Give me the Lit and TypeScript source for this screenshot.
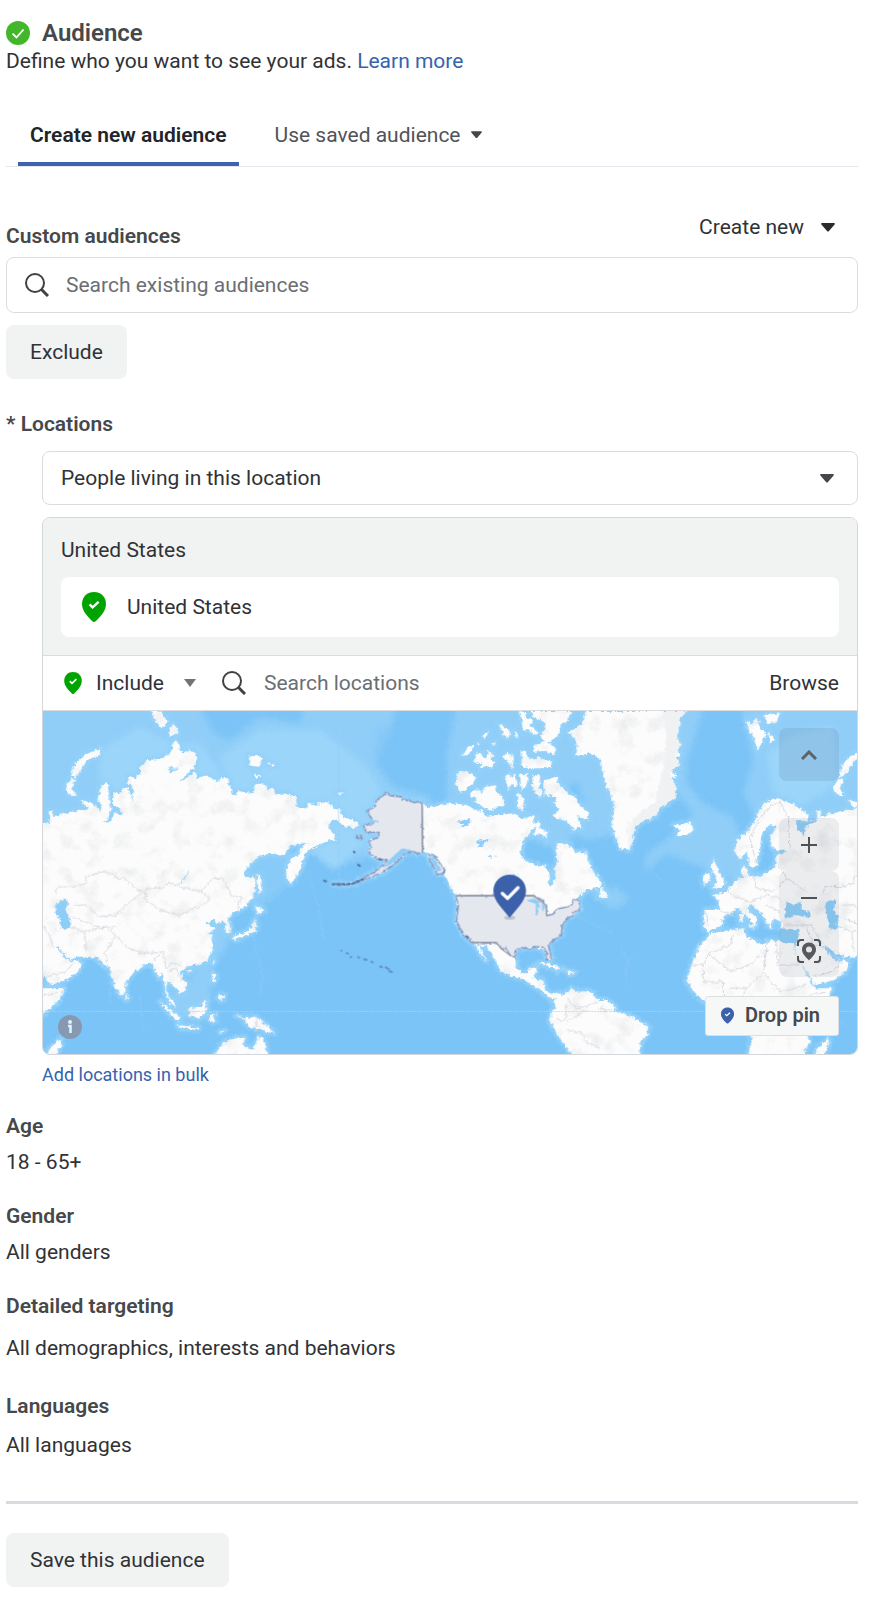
import { LitElement, html, css } from "lit";
import { customElement } from "lit/decorators.js";

// Map geometry. Each sheet has its own origin on the 2442 x 1029 canvas.
const EURASIA =
  "M10,355L40,355 42,340 38,320 52,316 50,336 70,334 75,322 95,326 130,314 150,316 158,308 145,300 134,286 165,292 185,310 192,320 198,302 188,290 186,272 192,265 200,240 210,232 220,240 218,260 222,300 225,310 226,320 218,330 214,345 200,350 215,353 225,345 236,322 258,332 255,310 232,302 232,260 240,265 258,262 262,245 275,250 283,265 290,292 292,262 286,240 275,235 277,215 300,218 305,208 315,208 312,185 335,165 370,162 392,150 400,158 395,145 408,138 410,118 422,108 432,125 430,138 472,140 484,158 475,180 470,190 445,215 430,230 465,212 480,200 482,220 495,215 520,215 545,232 555,218 578,220 580,240 590,265 600,272 605,258 635,262 650,265 655,240 668,236 690,240 695,255 710,246 720,268 750,265 770,272 780,275 782,300 790,310 815,310 815,295 840,298 812,292 827,300 847,303 847,290 867,293 887,298 892,310 912,315 922,335 947,345 962,352 970,360 952,372 942,360 932,370 917,358 902,345 887,348 877,365 897,395 902,408 877,405 852,420 832,430 817,436 806,452 795,490 780,515 765,538 755,520 752,490 765,460 785,450 800,425 814,410 790,418 765,420 745,450 720,446 690,448 668,452 640,480 622,500 625,510 645,520 655,512 660,540 650,575 620,610 598,620 585,628 575,640 582,665 580,685 570,682 568,660 560,645 555,650 540,655 535,645 525,645 510,658 525,665 540,668 520,685 530,700 528,735 515,765 485,778 450,785 440,795 432,800 440,820 452,840 448,858 432,865 420,850 405,838 395,830 390,850 400,880 415,890 418,905 405,900 390,870 385,830 378,800 368,818 358,795 345,775 325,780 310,790 295,800 270,830 268,860 255,872 240,850 225,810 220,785 205,783 185,760 160,755 120,755 105,765 80,745 65,722 60,728 75,745 90,762 110,770 120,765 137,775 125,800 90,825 40,840 20,800 10,800Z" +
  "M10,850L85,850 70,885 25,925 10,935Z M75,1000L75,1020 60,1050 35,1050 40,1030 65,1010Z" +
  "M195,130L190,150 155,165 130,200 120,215 105,215 115,180 145,150Z M105,218L118,222 108,250 122,272 100,268 88,250Z" +
  "M345,15L375,20 380,30 395,50 380,70 360,55Z M400,70L412,58 428,75 425,88 398,95Z";

const ASIA_ISLANDS =
  "M638,155L660,150 680,162 670,185 640,182Z M695,173L718,180 710,186Z M655,205L672,214 660,220Z" +
  "M535,1050L565,1010 600,1000 628,998 620,1020 650,1035 668,995 680,1000 690,1030 695,1055 535,1055Z" +
  "M600,930L625,940 660,935 690,960 715,985 690,980 670,970 640,965 625,945Z M458,910L490,905 510,885 510,920 490,940 460,930Z" +
  "M372,890L400,910 430,935 430,950 405,930Z M425,960L490,968 485,974 430,968Z M520,930L540,928 530,936 538,950 524,948Z" +
  "M528,805L540,810 536,832 528,828Z M550,868L565,872 560,886 545,880Z M590,700L600,690 640,680 655,645 662,660 655,680 630,690 600,705Z" +
  "M658,602L685,615 665,628Z M663,510L672,516 678,560 668,565Z M530,765L537,768 530,778Z M268,866L278,880 270,886Z M455,795L466,798 458,804Z M550,980L566,976 552,984Z";

const AMERICAS =
  "M366,296L385,310 410,300 450,295 500,300 530,318 545,315 555,335 575,330 600,330 640,325 655,335 670,345 690,330 705,335 700,350 712,360 700,370 690,385 675,400 665,425 660,450 680,470 720,482 735,485 750,510 745,535 757,542 768,520 762,490 775,470 768,440 772,415 800,415 820,435 830,445 855,440 865,470 880,500 905,535 900,548 870,552 855,560 830,580 838,590 840,615 820,628 800,640 785,665 785,690 760,700 745,720 755,760 740,765 735,735 700,725 665,730 645,735 645,760 650,790 665,805 680,805 690,790 710,785 705,810 700,822 730,825 735,855 760,870 775,862 770,880 750,880 730,862 690,835 670,820 640,815 600,795 590,770 575,745 560,725 545,725 525,715 515,712 490,690 470,650 475,600 467,572 440,520 430,495 400,448 375,442 368,440Z" +
  "M760,890L775,865 790,870 815,850 830,860 870,858 895,885 920,885 945,905 940,920 985,930 1045,965 1040,990 1020,1015 1018,1055 820,1055 780,1000 750,950 755,920 770,905Z" +
  "M522,715L540,728 550,750 560,768 545,752Z M715,775L740,773 790,793 762,790Z M800,796L826,802 805,808Z M760,790L772,800Z M450,535L470,558 455,552Z" +
  "M475,198L500,200 528,215 520,235 495,255 480,262 468,240Z M515,262L530,250 545,265 555,246 590,240 585,255 610,280 615,300 590,305 575,318 545,305 525,290 530,278 510,275Z" +
  "M485,152L505,126 525,120 505,150Z M530,145L545,140 548,158 560,160 565,135 580,150 568,165 588,172 575,188 560,182 540,190 545,175 522,172Z M596,58L612,66 630,75 628,98 612,92Z M548,90L565,80 555,105Z M610,150L625,142 628,155 640,145 636,192 628,170 615,165Z M645,75L655,95 648,102Z M530,115L538,112 536,120Z M575,115L590,110 580,122Z" +
  "M655,18L680,22 675,35 700,45 690,60 705,72 720,85 700,90 685,72 672,78 668,50Z M690,18L815,18 800,50 785,58 775,95 755,105 745,115 765,125 765,148 735,138 700,140 705,120 735,110 720,90 740,70 730,50 705,40Z M665,135L678,140 690,165 720,160 755,170 750,190 685,190 665,180Z" +
  "M615,215L630,208 634,220 645,205 650,245 635,240 625,255Z M660,210L685,205 680,240 665,260Z M700,210L720,215 718,250 728,262 722,275 705,265 696,240Z M728,225L745,222 770,215 775,235 790,248 810,270 822,274 840,300 865,325 865,345 850,342 830,330 845,370 832,368 820,375 806,352 790,345 760,335 775,310 762,295 770,280 750,270 735,276Z M715,345L720,370 745,382 735,395 720,388 700,390Z M652,262L675,285 668,320 652,305Z M735,390L742,395 738,404Z M112,264L128,262 122,270Z";

const ALASKA =
  "M262,263L270,272 300,275 310,285 325,285 340,293 355,290 366,296 368,440 355,445 340,440 320,440 300,462 280,480 250,500 215,515 190,525 165,535 120,542 100,536 150,537 190,520 225,500 250,480 262,465 230,462 205,440 212,425 208,405 235,398 238,382 200,382 190,362 220,355 215,340 200,318 225,305 230,285Z M385,455L400,448 435,495 430,505 412,508Z M170,392L184,392 186,400 170,400Z";
const LOWER_48 =
  "M467,572L700,572 722,582 740,602 740,632 758,628 770,612 805,605 815,600 820,585 830,582 838,590 838,615 820,622 820,632 800,640 785,665 785,690 760,705 745,720 755,760 738,765 740,740 730,727 700,725 695,732 665,728 648,735 645,757 632,752 615,728 605,732 588,712 550,716 515,712 490,690 470,650 475,600Z";

const GREENLAND =
  "M20,18L320,18 296,40 300,60 290,95 305,120 285,128 300,150 280,165 300,180 270,195 292,215 260,225 290,250 258,250 285,280 255,300 240,310 225,335 185,350 165,365 150,435 120,430 95,360 104,300 75,230 60,160 30,145 -10,152 -10,110 -35,80 5,60Z";
const ATLANTIC =
  "M280,360L300,358 330,352 342,372 320,390 290,390 298,375Z M498,45L515,60 530,35 545,75 560,90 550,100 535,135 520,95 505,70Z M550,30L600,25 590,50 565,55Z M565,82L585,105 570,112Z" +
  "M400,460L412,490 425,515 437,535 425,548 395,550 410,530 405,510 392,490Z M370,515L390,500 390,530 370,540Z M65,545L85,575 55,577Z" +
  "M600,282L640,298 685,330 685,352 650,350 655,380 675,385 685,350 720,340 720,700 660,675 600,670 605,650 580,640 575,670 560,655 545,625 515,600 500,610 530,640 525,665 515,650 490,625 475,610 455,620 430,635 425,660 405,670 385,680 370,665 375,615 420,615 415,585 400,570 440,560 475,520 495,515 483,500 490,478 500,490 505,510 525,515 560,505 585,485 590,450 620,440 580,430 568,400 590,365 568,360 545,385 540,430 530,480 510,490 500,440 480,462 463,440 470,405 500,385 525,345 545,300 580,280Z" +
  "M655,670L720,670 720,830 706,842 660,770 640,725 655,715Z" +
  "M390,685L490,670 500,695 550,720 570,705 640,715 640,730 670,790 700,845 710,855 755,850 740,885 690,930 670,960 690,1010 665,1055 505,1055 515,1000 500,950 470,900 375,890 340,860 320,825 335,780 355,730 380,700Z" +
  "M478,625L490,625 488,652 478,648Z M505,662L522,660 520,670Z";

const EURASIA_BORDERS =
  "M58,565L65,545 110,545 150,535 150,515 205,498 245,520 265,520 300,550 335,570 M335,548L380,550 395,533 430,545 495,560 530,520 560,520 590,575 615,575 605,615 M335,550L325,580 370,615 430,630 500,600 522,580 495,560 M115,600L150,600 190,635 240,630 270,600 315,565 M105,635L160,655 195,670 240,665 M105,665L145,680 150,740 M145,680L210,665 240,690 205,745 215,770 M240,690L270,725 320,745 380,740 350,770 M380,740L390,790 410,775 440,780 M395,800L420,790 440,830 M20,660L40,690 55,730 M30,815L90,800 115,770 M20,870L65,862 M660,935L660,980";
const ATLANTIC_BORDERS =
  "M530,480L510,400 540,340 575,300 600,290 625,340 630,430 M440,560L470,575 510,590 560,570 600,580 M520,515L530,550 580,560 620,520 590,470 M420,620L460,630 M380,625L385,665 M560,600L600,620 M620,520L680,560 M460,690L450,720 385,745 M330,780L370,780 385,745 450,800 510,780 560,735 560,700 M590,710L592,780 660,780 M560,735L550,800 500,850 450,850 M370,780L370,830 430,830 M550,800L600,860 680,840 M430,830L430,890 M500,850L480,890 M610,660L700,660 M680,670L700,720 720,725";

@customElement("app-root")
export class AppRoot extends LitElement {
  static styles = css`
    :host {
      display: block;
      box-sizing: border-box;
      padding: 19px 18px 20px 6px;
      background: #fff;
      color: #303236;
      font-family: Roboto, "Liberation Sans", sans-serif;
      font-size: 21px;
      line-height: 28px;
    }
    * { box-sizing: border-box; }
    svg { display: block; flex: none; }
    h1, h2, p { margin: 0; font-size: inherit; line-height: 28px; }
    h2, .label { display: block; color: #46484b; font-weight: 600; }
    button, input, select {
      font: inherit;
      color: inherit;
      border: 0;
      background: none;
      padding: 0;
      margin: 0;
    }
    select { appearance: none; }
    a { color: #3563ae; text-decoration: none; }
    .title { display: flex; align-items: center; gap: 12px; }
    h1 { font-size: 24px; font-weight: 600; color: #46484b; }
    .tabs {
      display: flex;
      gap: 24px;
      margin-top: 30px;
      padding-left: 12px;
      border-bottom: 1px solid #e4e6ee;
    }
    .tab {
      display: flex;
      align-items: center;
      gap: 10px;
      height: 61px;
      padding: 2px 12px 0;
      border-bottom: 4px solid transparent;
      color: #515358;
    }
    .tab.active { color: #222427; font-weight: 600; border-color: #3e62ad; }
    .head { display: flex; justify-content: space-between; align-items: flex-end; margin: 46px 0 7px; }
    .create { display: flex; align-items: center; gap: 17px; margin: 0 23px 9px 0; }
    .search { display: flex; align-items: center; gap: 17px; }
    .search input { flex: 1; min-width: 0; height: 100%; outline: 0; }
    .search input::placeholder { color: #6b6e73; opacity: 1; }
    .box { height: 56px; padding: 0 18px; border: 1px solid #dadce2; border-radius: 8px; }
    .grey { height: 54px; padding: 0 24px; border-radius: 8px; background: #f1f3f3; }
    .exclude { margin-top: 12px; }
    .locations { margin-top: 31px; }
    .indent { margin: 13px 0 0 36px; }
    .pick { position: relative; }
    .pick select {
      width: 100%;
      height: 54px;
      padding: 0 18px;
      border: 1px solid #dadce2;
      border-radius: 8px;
      background: #fff;
    }
    .pick svg { position: absolute; right: 24px; top: 20px; pointer-events: none; }
    .panel { margin: 12px 0 8px; border: 1px solid #d3d6da; border-radius: 8px; overflow: hidden; }
    .chosen { padding: 18px; background: #f1f3f3; border-bottom: 1px solid #dadce0; }
    .place {
      display: flex;
      align-items: center;
      gap: 21px;
      height: 60px;
      margin-top: 13px;
      padding: 0 21px;
      border-radius: 8px;
      background: #fff;
    }
    .bar { display: flex; align-items: center; gap: 26px; height: 55px; padding: 0 18px 0 21px; border-bottom: 1px solid #dadce0; }
    .include { display: flex; align-items: center; gap: 14px; }
    .include select { width: 74px; }
    .bar .search { flex: 1; height: 100%; gap: 18px; }
    .map { position: relative; }
    .world { width: 100%; height: 343px; }
    .ctl {
      display: flex;
      align-items: center;
      justify-content: center;
      width: 60px;
      height: 53px;
      border-radius: 8px;
      background: rgba(90, 95, 120, 0.1);
    }
    .tools { position: absolute; top: 17px; right: 18px; }
    .tools .ctl:first-child { margin-bottom: 37px; background: rgba(90, 110, 140, 0.16); }
    .drop {
      position: absolute;
      right: 18px;
      bottom: 18px;
      display: flex;
      align-items: center;
      gap: 11px;
      height: 40px;
      padding: 0 18px 2px 15px;
      border: 1px solid #dcdfe2;
      border-radius: 3px;
      background: #f6f8f8;
      color: #46484b;
      font-size: 20px;
      font-weight: 600;
    }
    .info { position: absolute; left: 15px; bottom: 15px; }
    .bulk { display: block; font-size: 18px; line-height: 24px; margin-bottom: 25px; }
    .field { margin-bottom: 26px; }
    .field p { margin-top: 8px; }
    .field.detail { margin-bottom: 30px; }
    .field.detail p { margin-top: 14px; }
    .field.lang { margin-bottom: 42px; }
    .field.lang p { margin-top: 11px; }
    hr { height: 3px; margin: 0 0 29px; border: 0; background: #dadbe0; }
  `;

  private caret(w: number, color: string) {
    return html`<svg width=${w} height=${w} viewBox="0 0 14 14" aria-hidden="true">
      <path d="M1 3h12c.9 0 1.2.9.6 1.5L8 11q-1 1-2 0L.4 4.500C-.2 3.900.1 3 1 3z" fill=${color} />
    </svg>`;
  }

  private lens() {
    return html`<svg width="24" height="24" viewBox="0 0 24 24" fill="none" stroke="#3f4145" stroke-width="2" aria-hidden="true">
      <circle cx="10" cy="10" r="9" /><path d="M16 16l7 7" stroke-width="3" />
    </svg>`;
  }

  private pin(w: number, h: number, color: string) {
    return html`<svg width=${w} height=${h} viewBox="0 0 24 30" aria-hidden="true">
      <path d="M12 0C5.300 0 0 4.700 0 12c0 7 5.500 12.500 10.400 17.200q1.600 1.500 3.200 0C18.500 24.500 24 19 24 12 24 4.700 18.700 0 12 0z" fill=${color} />
      <path d="M7.600 12.400l3 3 6-5.600" fill="none" stroke="#fff" stroke-width="2.400" />
    </svg>`;
  }

  private world() {
    return html`<svg class="world" viewBox="129 2133 2442 1029" preserveAspectRatio="xMidYMid slice" role="img" aria-label="World map">
      <defs>
        <filter id="rough" x="0" y="0" width="100%" height="100%" color-interpolation-filters="sRGB">
          <feTurbulence type="fractalNoise" baseFrequency="0.09" numOctaves="3" seed="4" result="n" />
          <feDisplacementMap in="SourceGraphic" in2="n" scale="15" xChannelSelector="R" yChannelSelector="G" />
        </filter>
        <filter id="fine" x="-5%" y="-5%" width="110%" height="110%" color-interpolation-filters="sRGB">
          <feTurbulence type="fractalNoise" baseFrequency="0.12" numOctaves="2" seed="9" result="n" />
          <feDisplacementMap in="SourceGraphic" in2="n" scale="9" xChannelSelector="R" yChannelSelector="G" />
        </filter>
        <filter id="relief" x="0" y="0" width="100%" height="100%" color-interpolation-filters="sRGB">
          <feTurbulence type="fractalNoise" baseFrequency="0.02" numOctaves="5" seed="11" />
          <feColorMatrix type="matrix" values="0 0 0 0 .86  0 0 0 0 .87  0 0 0 0 .88  1.300 0 0 0 -.65" result="t" />
          <feComposite in="t" in2="SourceGraphic" operator="in" result="s" />
          <feMerge><feMergeNode in="SourceGraphic" /><feMergeNode in="s" /></feMerge>
        </filter>
        <filter id="soft" x="-5%" y="-5%" width="110%" height="110%"><feGaussianBlur stdDeviation="9" /></filter>
        <filter id="shore" x="-5%" y="-5%" width="110%" height="110%"><feGaussianBlur stdDeviation="4" /></filter>
        <g id="eurasia"><path d=${EURASIA} /></g>
        <g id="coast">
          <use href="#eurasia" transform="translate(108 2115)" />
          <use href="#eurasia" transform="translate(2411 2115)" />
          <path d=${ASIA_ISLANDS} transform="translate(108 2115)" />
          <path d=${AMERICAS} transform="translate(900 2115)" />
          <path d=${ALASKA} transform="translate(900 2115)" />
          <path d=${GREENLAND} transform="translate(1740 2115)" />
          <path d=${ATLANTIC} transform="translate(1740 2115)" />
        </g>
      </defs>
      <rect x="100" y="2100" width="2500" height="1100" fill="#7bc4f7" />
      <g filter="url(#rough)">
        <g fill="#90cef8" filter="url(#soft)">
          <path d="M60 2060H1200L1170 2200 1130 2290 1180 2360 1290 2390 1320 2480 1140 2560 1000 2600 900 2530H60z" />
          <path d="M1380 2060H2100L2040 2350 1900 2490 1860 2500 1760 2520 1720 2500 1700 2560 1340 2420 1340 2260z" />
          <path d="M2050 2060H2130L2060 2290 2060 2350 2110 2410 2200 2450 2300 2700 2190 2640 2100 2600 2000 2560 1930 2620 1940 2560 2040 2490 2080 2440 2030 2380 2060 2230z" />
          <path d="M2210 2060H2640V2500H2290L2230 2380 2260 2280z" />
          <path d="M1770 2680L1850 2660 1890 2700 1840 2730z" />
          <path d="M640 2760L690 2790 680 2840 640 2900 620 3060 540 3060 500 2980 560 2960z" />
          <path d="M680 2540L780 2560 900 2560 880 2640 760 2740z" opacity=".7" />
        </g>
        <g fill="#9bd5fa" filter="url(#soft)">
          <path d="M700 2380L660 2270 780 2190 960 2190 1100 2300 1160 2400 1130 2500 1000 2610 900 2520z" />
          <path d="M300 2250L420 2180 520 2230 600 2230 700 2370 500 2400 300 2420z" />
          <path d="M2300 2260L2380 2200 2500 2180 2520 2350 2400 2420 2320 2380z" />
        </g>
        <g fill="#7bc4f7" filter="url(#soft)">
          <path d="M590 2100H920L900 2170 780 2150 690 2220 640 2200z" />
          <path d="M1700 2370L1730 2340 1750 2400 1720 2460z" />
          <path d="M1130 2190L1170 2180 1180 2250 1150 2300 1120 2270z" opacity=".5" />
        </g>
        <use href="#coast" fill="#9bd5fa" stroke="#94d1f9" stroke-width="18" stroke-linejoin="round" filter="url(#shore)" />
        <g fill="none" stroke="#8ccdf8" stroke-width="6" opacity=".45">
          <path d="M760 2750L765 2850 790 2930 780 2990M800 2710L860 2660M330 2870V3010M930 2640L960 2740 970 2820M1730 2750L1840 2800M1990 2640Q1940 2620 1950 2560M1860 2830L1890 2900M420 2980L430 3100M1900 2860Q1870 2900 1880 2960M2500 3040L2540 3080" />
        </g>
        <g fill="#fcfcfc" filter="url(#relief)"><use href="#coast" /></g>
        <path d="M245,18L320,18 296,40 300,60 290,95 305,120 285,150 300,180 270,200 290,250 285,280 240,310 225,335 185,350 165,365 150,435 140,430 160,340 225,290 250,190 260,100Z" transform="translate(1740 2115)" fill="#f0f1f2" />
        <g transform="translate(108 2115)" fill="#8dcdf8">
          <path d="M58,600L75,585 95,585 96,600 85,612 102,635 102,670 75,672 70,640 58,620Z M460,493L455,510 435,535 422,540 440,525Z M400,185L412,195 430,182 425,192 402,205Z" />
        </g>
        <g transform="translate(1740 2115)" fill="#8dcdf8">
          <path d="M733,600L750,585 770,587 760,612 775,635 775,670 748,672 745,640Z M620,590L640,600 665,590 665,610 692,625 690,637 650,630 612,640Z M648,345L690,350 715,340 700,355 680,360 672,390 652,370Z M736,720L765,745 795,752 780,765 750,745Z M600,672L655,675 655,712 600,712Z" />
        </g>
        <g transform="translate(900 2115)" fill="#8dcdf8">
          <path d="M470,350L510,342 510,358 480,372 490,358Z M525,408L570,402 545,422 530,430 540,415Z M558,456L590,450 570,460Z M640,500L648,520 640,530Z" />
        </g>
        <g fill="none" stroke="#d6d6df" stroke-width="3">
          <path d=${EURASIA_BORDERS} transform="translate(108 2115)" />
          <path d=${EURASIA_BORDERS} transform="translate(2411 2115)" />
          <path d=${ATLANTIC_BORDERS} transform="translate(1740 2115)" />
          <path d="M800,880L830,910 870,900 895,890M770,945L795,945 800,900M800,950L850,920 870,915M800,975L850,985 855,1010M855,1010L900,1030M910,900L900,915 935,915" transform="translate(900 2115)" />
        </g>
      </g>
      <g transform="translate(900 2115)">
        <g fill="#e4e7ed" stroke="#7f97c2" stroke-width="4" stroke-linejoin="round" filter="url(#fine)">
          <path d=${ALASKA} /><path d=${LOWER_48} />
        </g>
        <path d="M366,296L368,440M470,572H700L740,602V632M515,712L588,712 605,732 632,752" fill="none" stroke="#9699a2" stroke-width="4" />
        <g fill="#8dcdf8" filter="url(#fine)">
          <path d="M680,585L705,582 722,592 710,600Z M708,600L718,598 712,632 706,628Z M725,595L738,605 728,620Z M295,440L305,430 335,434 320,440 285,470 250,490 262,470Z M390,458L400,455 425,495 412,500Z M215,345L235,348 235,354 220,352Z" />
        </g>
        <path d="M70,526L80,530M95,538L155,537 190,522M160,438L165,444M172,478L185,486M498,692L512,704M235,462L250,465" stroke="#5071aa" stroke-width="6" stroke-dasharray="11 4" fill="none" />
        <path d="M122,737h5M138,743l8,4M150,756h6M172,756l8,2M190,762l12,3M212,769l8,4M238,784l10,3M255,786l14,8M266,798l12,3" stroke="#6189bf" stroke-width="5" />
        <path d="M116,60V520" stroke="#98d0f7" stroke-width="2" />
        <ellipse cx="629" cy="638" rx="17" ry="6" fill="#bfc3c9" />
        <path d="M629 509C602 509 580 530 580 558C580 588 610 614 629 638C648 614 678 588 678 558C678 530 656 509 629 509Z" fill="#3c60aa" />
        <path d="M607 565l16 15 31-32" fill="none" stroke="#fff" stroke-width="10" stroke-linecap="round" stroke-linejoin="round" />
      </g>
      <path d="M100 3034H2600" stroke="#b9d2e3" stroke-width="2" stroke-dasharray="6 3" opacity=".7" />
    </svg>`;
  }

  render() {
    return html`
      <header>
        <div class="title">
          <svg width="24" height="24" viewBox="0 0 24 24" aria-hidden="true">
            <circle cx="12" cy="12" r="12" fill="#42b72a" />
            <path d="M6.500 12.600l4 3.900 7-8" fill="none" stroke="#fff" stroke-width="1.800" />
          </svg>
          <h1>Audience</h1>
        </div>
        <p>Define who you want to see your ads. <a href="#learn">Learn more</a></p>
      </header>

      <nav class="tabs">
        <button class="tab active">Create new audience</button>
        <button class="tab">Use saved audience ${this.caret(11, "#444649")}</button>
      </nav>

      <section>
        <div class="head">
          <label class="label" for="audiences">Custom audiences</label>
          <button class="create">Create new ${this.caret(14, "#292b2f")}</button>
        </div>
        <div class="search box">
          ${this.lens()}
          <input id="audiences" type="text" placeholder="Search existing audiences" />
        </div>
        <button class="grey exclude">Exclude</button>
      </section>

      <section>
        <label class="label locations" for="scope">* Locations</label>
        <div class="indent">
          <div class="pick">
            <select id="scope"><option>People living in this location</option></select>
            ${this.caret(14, "#444649")}
          </div>
          <div class="panel">
            <div class="chosen">
              <p>United States</p>
              <div class="place">${this.pin(24, 30, "#00a400")}<span>United States</span></div>
            </div>
            <div class="bar">
              <div class="include">
                ${this.pin(18, 22, "#00a400")}
                <select aria-label="Include or exclude"><option>Include</option></select>
                <svg width="12" height="8" viewBox="0 0 12 8" aria-hidden="true"><path d="M0 0h12L6 8z" fill="#717377" /></svg>
              </div>
              <div class="search">
                ${this.lens()}
                <input type="text" aria-label="Search locations" placeholder="Search locations" />
              </div>
              <button>Browse</button>
            </div>
            <div class="map">
              ${this.world()}
              <div class="tools">
                <button class="ctl" aria-label="Collapse map">
                  <svg width="16" height="10" viewBox="0 0 16 10" fill="none" stroke="#606266" stroke-width="3"><path d="M1 9l7-7 7 7" /></svg>
                </button>
                <button class="ctl" aria-label="Zoom in">
                  <svg width="16" height="16" viewBox="0 0 16 16" stroke="#505256" stroke-width="2"><path d="M0 8h16M8 0v16" /></svg>
                </button>
                <button class="ctl" aria-label="Zoom out">
                  <svg width="16" height="16" viewBox="0 0 16 16" stroke="#505256" stroke-width="2"><path d="M0 8h16" /></svg>
                </button>
                <button class="ctl" aria-label="Locate">
                  <svg width="24" height="24" viewBox="0 0 24 24" fill="none">
                    <path d="M1 7V4q0-3 3-3h3M17 1h3q3 0 3 3v3M23 17v3q0 3-3 3h-3M7 23H4q-3 0-3-3v-3" stroke="#505256" stroke-width="2" />
                    <path fill-rule="evenodd" d="M12 3.500c-4 0-7 3-7 7 0 4.500 4.500 8 7 11 2.500-3 7-6.500 7-11 0-4-3-7-7-7zm0 4a3 3 0 1 1 0 6 3 3 0 0 1 0-6z" fill="#56585c" />
                  </svg>
                </button>
              </div>
              <svg class="info" width="24" height="24" viewBox="0 0 24 24" role="img" aria-label="Map information">
                <circle cx="12" cy="12" r="12" fill="#8799b0" />
                <circle cx="12" cy="7" r="2" fill="#dff1fd" /><path d="M10 11h2.500v7" fill="none" stroke="#dff1fd" stroke-width="2.600" />
              </svg>
              <button class="drop">${this.pin(13, 17, "#3c60aa")}Drop pin</button>
            </div>
          </div>
          <a class="bulk" href="#bulk">Add locations in bulk</a>
        </div>
      </section>

      <section class="field"><h2>Age</h2><p>18 - 65+</p></section>
      <section class="field"><h2>Gender</h2><p>All genders</p></section>
      <section class="field detail"><h2>Detailed targeting</h2><p>All demographics, interests and behaviors</p></section>
      <section class="field lang"><h2>Languages</h2><p>All languages</p></section>
      <hr />
      <button class="grey">Save this audience</button>
    `;
  }
}
